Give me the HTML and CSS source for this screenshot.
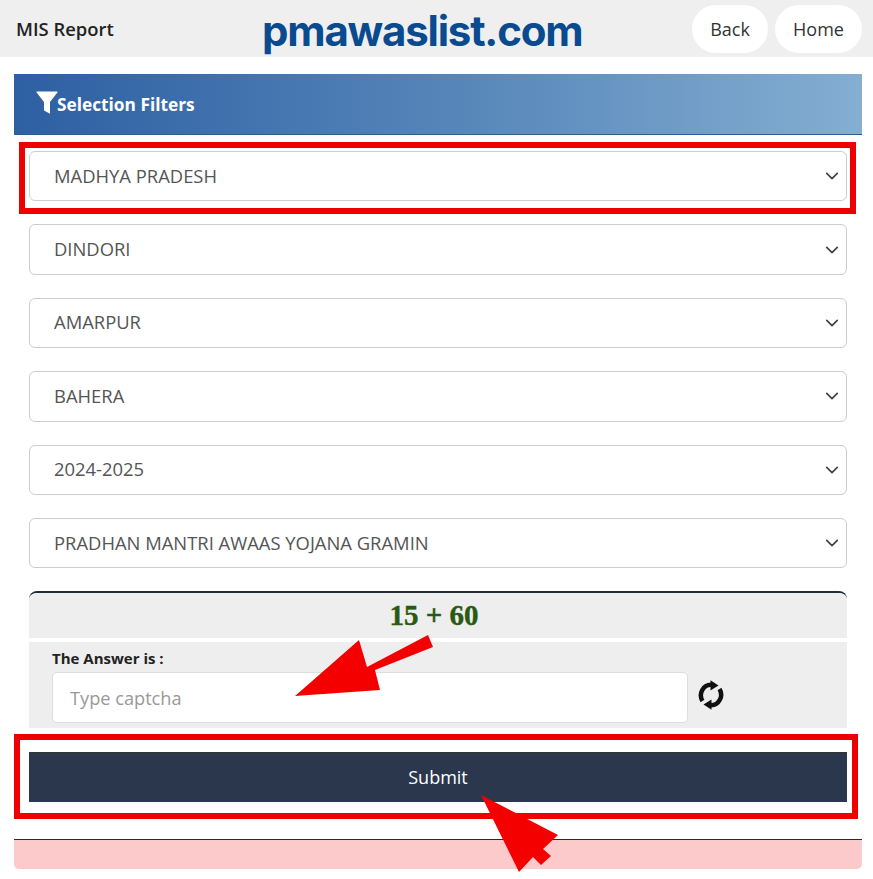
FILE: index.html
```html
<!DOCTYPE html>
<html lang="en">
<head>
  <meta charset="UTF-8">
  <meta name="viewport" content="width=device-width, initial-scale=1.0">
  <title>MIS Report</title>
  <link rel="stylesheet" href="styles.css">
</head>
<body>
  <header class="top-bar">
    <h1 class="report-title">MIS Report</h1>
    <div class="site-logo">pmawaslist.com</div>
    <nav class="top-nav">
      <a href="#" class="pill-btn back-btn">Back</a>
      <a href="#" class="pill-btn home-btn">Home</a>
    </nav>
  </header>

  <main class="page">
    <section class="filter-panel">
      <h2 class="panel-heading">
        <svg class="filter-icon" viewBox="0 0 22 23" aria-hidden="true">
          <path d="M1 0.5Q0 0.5 0.6 1.6L8 11V19.5L14 22.8V11L21.4 1.6Q22 0.5 21 0.5Z"/>
        </svg>
        Selection Filters
      </h2>

      <form class="panel-body">
        <select class="field-select"><option>MADHYA PRADESH</option></select>
        <select class="field-select"><option>DINDORI</option></select>
        <select class="field-select"><option>AMARPUR</option></select>
        <select class="field-select"><option>BAHERA</option></select>
        <select class="field-select"><option>2024-2025</option></select>
        <select class="field-select"><option>PRADHAN MANTRI AWAAS YOJANA GRAMIN</option></select>

        <div class="captcha-box">
          <div class="captcha-sum">15 + 60</div>
          <div class="captcha-form">
            <label class="captcha-label" for="captcha">The Answer is :</label>
            <div class="captcha-row">
              <input class="captcha-input" id="captcha" type="text" placeholder="Type captcha">
              <svg class="refresh-icon" viewBox="0 0 26 30" aria-hidden="true">
                <path class="refresh-arc" d="M4.5 21A10 10.5 0 0 1 13 4.8"/>
                <path class="refresh-arc" d="M21.5 9A10 10.5 0 0 1 13 25.2"/>
                <path d="M12.5 0.3L20.5 5.5L12.5 10.5Z"/>
                <path d="M13.5 19.5L5.5 24.5L13.5 29.7Z"/>
              </svg>
            </div>
          </div>
        </div>

        <button class="submit-btn" type="button">Submit</button>
      </form>

      <div class="message-bar"></div>
    </section>
  </main>

  <!-- red markup drawn over the page -->
  <div class="mark-box mark-state"></div>
  <div class="mark-box mark-submit"></div>
  <svg class="mark-arrows" width="873" height="879" viewBox="0 0 873 879" aria-hidden="true">
    <polygon points="295,696 359,640 367,667 428,635 433,647 375,670 380,690"/>
    <polygon points="481,795 558,835 543,849 551,856 541,865 533,857 519,872"/>
  </svg>
</body>
</html>
```

FILE: styles.css
```css
html, body {
  margin: 0;
  padding: 0;
}
body {
  position: relative;
  height: 879px;
  overflow: hidden;
  background-color: white;
  color: #333;
  font-family: "Open Sans", "Liberation Sans", sans-serif;
}
.top-bar {
  display: flex;
  align-items: center;
  height: 57px;
  padding: 0 11px 0 16px;
  background-color: #efefef;
}
.report-title {
  width: 246px;
  margin: 0;
  font-size: 18.4px;
  font-weight: 600;
  color: #222;
}
.site-logo {
  flex: 1;
  margin-top: 3px;
  font-family: Inter, "Liberation Sans", sans-serif;
  font-size: 42px;
  font-weight: 700;
  letter-spacing: -1.2px;
  color: #0a4a8f;
}
.top-nav {
  display: flex;
  gap: 7px;
}
.pill-btn {
  display: flex;
  align-items: center;
  justify-content: center;
  height: 48px;
  border-radius: 24px;
  background-color: white;
  color: #333;
  font-size: 18px;
  text-decoration: none;
}
.back-btn {
  width: 76px;
}
.home-btn {
  width: 87px;
}
.page {
  padding: 17px 11px 0 14px;
}
.panel-heading {
  display: flex;
  align-items: center;
  height: 60px;
  margin: 0;
  padding-left: 22px;
  border-bottom: 1px solid #2d5d8f;
  background: linear-gradient(90deg, #2d5fa3 0%, #5484b8 50%, #84aed2 100%);
  color: white;
  font-size: 17.3px;
  font-weight: 700;
}
.filter-icon {
  width: 22px;
  height: 23px;
  margin-top: -3px;
  margin-right: -1px;
  fill: white;
}
.panel-body {
  display: flex;
  flex-direction: column;
  padding: 16px 15px 0;
}
.field-select {
  height: 50.4px;
  margin-bottom: 23px;
  padding: 0 40px 2px 24px;
  border: 1px solid #ccc;
  border-radius: 6px;
  background: white url("data:image/svg+xml,%3Csvg xmlns='http://www.w3.org/2000/svg' viewBox='0 0 16 16'%3E%3Cpath fill='none' stroke='%23444' stroke-width='2' stroke-linecap='round' stroke-linejoin='round' d='M2 5l6 6 6-6'/%3E%3C/svg%3E") no-repeat right 7px center / 14px 14px;
  appearance: none;
  color: #555;
  font-family: inherit;
  font-size: 18.4px;
}
.captcha-box {
  border-top: 2px solid #222b38;
  border-radius: 8px 8px 0 0;
}
.captcha-sum {
  height: 45px;
  padding-right: 8px;
  border-radius: 8px 8px 0 0;
  background-color: #eee;
  color: #2a5a12;
  font-family: "Liberation Serif", serif;
  font-size: 29px;
  font-weight: 700;
  line-height: 45px;
  text-align: center;
  -webkit-text-stroke: 0.4px #2a5a12;
}
.captcha-form {
  margin-top: 4px;
  padding: 8px 23px 5px;
  background-color: #eee;
}
.captcha-label {
  display: block;
  height: 22px;
  color: #222;
  font-size: 15px;
  font-weight: 700;
  line-height: 16px;
}
.captcha-row {
  display: flex;
  align-items: center;
  gap: 10px;
}
.captcha-input {
  box-sizing: border-box;
  width: 636px;
  height: 51px;
  padding: 0 17px;
  border: 1px solid #ddd;
  border-radius: 5px;
  background-color: white;
  font-family: inherit;
  font-size: 18.2px;
}
.captcha-input::placeholder {
  color: #999;
}
.refresh-icon {
  width: 26px;
  height: 30px;
  margin-top: -6px;
  fill: #111;
}
.refresh-arc {
  fill: none;
  stroke: #111;
  stroke-width: 4.5;
}
.submit-btn {
  height: 50px;
  margin-top: 24px;
  padding-bottom: 3px;
  border: none;
  border-top: 1px solid #333;
  background-color: #2a374d;
  color: white;
  font-family: inherit;
  font-size: 18px;
}
.message-bar {
  height: 29px;
  margin-top: 37px;
  border-top: 1px solid #2a2a2a;
  border-radius: 0 0 5px 5px;
  background-color: #fccaca;
}
.mark-box {
  position: absolute;
  box-sizing: border-box;
  border: 6px solid #ee0000;
}
.mark-state {
  left: 19px;
  top: 142px;
  width: 837px;
  height: 72px;
}
.mark-submit {
  left: 14px;
  top: 734px;
  width: 844px;
  height: 85px;
}
.mark-arrows {
  position: absolute;
  left: 0;
  top: 0;
  fill: #f40000;
}
```
